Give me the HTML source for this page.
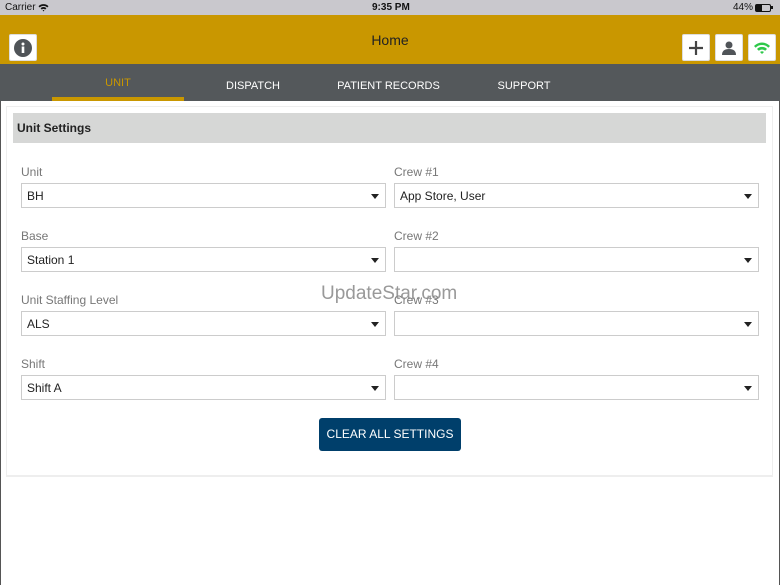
<!DOCTYPE html>
<html><head><style>
*{margin:0;padding:0;box-sizing:border-box}
body{width:780px;height:585px;overflow:hidden;background:#fff;font-family:"Liberation Sans",sans-serif;position:relative}
.a{position:absolute}
.status{left:0;top:0;width:780px;height:15px;background:#c9c8cd;font-size:10px;color:#111}
.hdr{left:0;top:15px;width:780px;height:49px;background:#c99700}
.nav{left:0;top:64px;width:780px;height:37px;background:#54585b}
.tab{top:80px;font-size:11px;color:#fff;text-align:center}
.btn{top:34px;width:28px;height:27px;background:#fff;border:1px solid #ddd;border-radius:2px;display:flex;align-items:center;justify-content:center}
.card{left:6px;top:106px;width:767px;height:371px;border:1px solid #eee;border-bottom:2px solid #eee}
.sec{left:13px;top:113px;width:753px;height:30px;background:#d6d7d6;font-size:12px;font-weight:bold;color:#222;padding:8px 0 0 4px}
.lbl{font-size:12px;color:#777}
.f{height:25px;border:1px solid #ccc;font-size:12px;color:#222;padding:5px 0 0 5px}
.f::after{content:"";position:absolute;right:6px;top:10px;border-left:4px solid transparent;border-right:4px solid transparent;border-top:5px solid #222}
.L{left:21px;width:365px}.R{left:394px;width:365px}
.cbtn{left:319px;top:418px;width:142px;height:33px;background:#003f6b;border-radius:3px;color:#fff;font-size:12px;text-align:center;line-height:33px}
</style></head><body>
<div class="a status"><span class="a" style="left:5px;top:2px">Carrier</span>
<svg class="a" style="left:38px;top:3px" width="11" height="9" viewBox="0 0 11 9"><path d="M0.5 3.2A7 7 0 0 1 10.5 3.2L9.2 4.5A5 5 0 0 0 1.8 4.5Z M2.6 5.3A4 4 0 0 1 8.4 5.3L7.1 6.6A2.2 2.2 0 0 0 3.9 6.6Z M4.6 7.4A1.3 1.3 0 0 1 6.4 7.4L5.5 8.5Z" fill="#111"/></svg>
<span class="a" style="left:372px;top:2px;font-weight:bold">9:35 PM</span>
<span class="a" style="left:733px;top:2px">44%</span>
<div class="a" style="left:755px;top:4px;width:16px;height:8px;border:1px solid #111;border-radius:2px"><div style="width:6px;height:6px;background:#111"></div></div>
<div class="a" style="left:771px;top:6px;width:2px;height:3px;background:#111"></div></div>
<div class="a hdr"></div>
<div class="a" style="left:0;top:32px;width:780px;text-align:center;font-size:14px;color:#222">Home</div>
<div class="a btn" style="left:9px"><svg width="18" height="18"><circle cx="9" cy="9" r="9" fill="#505458"/><rect x="7.7" y="7.5" width="2.6" height="6.5" fill="#fff"/><circle cx="9" cy="5" r="1.5" fill="#fff"/></svg></div>
<div class="a btn" style="left:682px"><svg width="16" height="16"><path d="M8 1V15M1 8H15" stroke="#444" stroke-width="2.2"/></svg></div>
<div class="a btn" style="left:715px"><svg width="16" height="16"><circle cx="8" cy="5" r="3.5" fill="#505458"/><path d="M1 15Q1 9 8 9Q15 9 15 15Z" fill="#505458"/></svg></div>
<div class="a btn" style="left:748px"><svg width="18" height="14" viewBox="0 0 18 14"><path d="M1 5A11 11 0 0 1 17 5L15.3 6.7A8.6 8.6 0 0 0 2.7 6.7Z M4 8A7 7 0 0 1 14 8L12.2 9.8A4.5 4.5 0 0 0 5.8 9.8Z M7 11A3 3 0 0 1 11 11L9 13Z" fill="#2ec84a"/></svg></div>
<div class="a nav"></div>
<div class="a tab" style="left:52px;width:132px;top:77px;color:#c99700">UNIT</div>
<div class="a" style="left:52px;top:97px;width:132px;height:4px;background:#c99700"></div>
<div class="a tab" style="left:213px;width:80px">DISPATCH</div>
<div class="a tab" style="left:330px;width:117px">PATIENT RECORDS</div>
<div class="a tab" style="left:489px;width:70px">SUPPORT</div>
<div class="a card"></div>
<div class="a sec">Unit Settings</div>
<div class="a lbl" style="left:21px;top:165px">Unit</div><div class="a f L" style="top:183px">BH</div>
<div class="a lbl" style="left:394px;top:165px">Crew #1</div><div class="a f R" style="top:183px">App Store, User</div>
<div class="a lbl" style="left:21px;top:229px">Base</div><div class="a f L" style="top:247px">Station 1</div>
<div class="a lbl" style="left:394px;top:229px">Crew #2</div><div class="a f R" style="top:247px"></div>
<div class="a lbl" style="left:21px;top:293px">Unit Staffing Level</div><div class="a f L" style="top:311px">ALS</div>
<div class="a lbl" style="left:394px;top:293px">Crew #3</div><div class="a f R" style="top:311px"></div>
<div class="a lbl" style="left:21px;top:357px">Shift</div><div class="a f L" style="top:375px">Shift A</div>
<div class="a lbl" style="left:394px;top:357px">Crew #4</div><div class="a f R" style="top:375px"></div>
<div class="a" style="left:321px;top:283px;font-size:19px;color:#888;opacity:.85">UpdateStar.com</div>
<div class="a cbtn">CLEAR ALL SETTINGS</div>
<div class="a" style="left:0;top:101px;width:1px;height:484px;background:#555"></div>
<div class="a" style="left:779px;top:101px;width:1px;height:484px;background:#555"></div>
</body></html>
